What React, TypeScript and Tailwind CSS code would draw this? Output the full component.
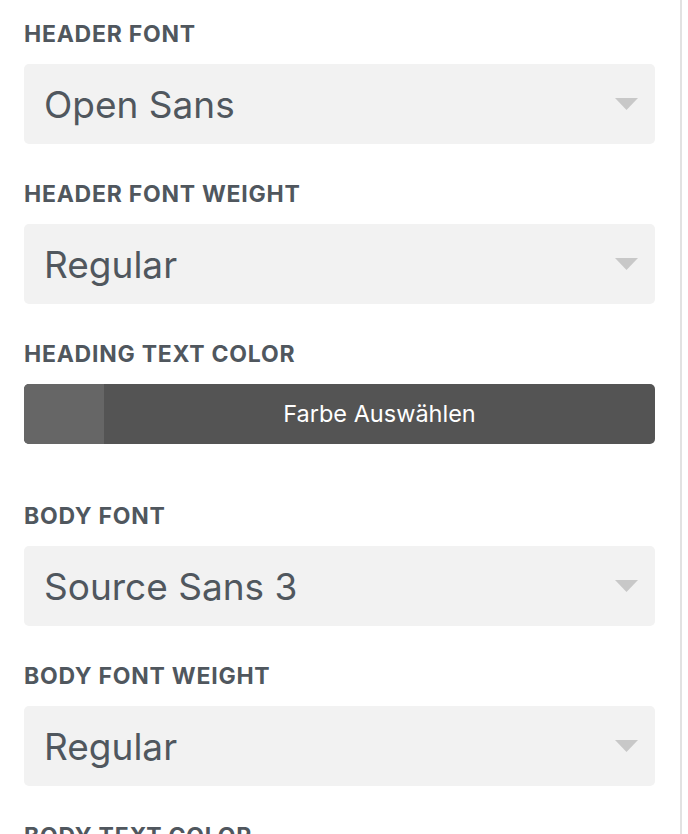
import React from "react";

const font = { fontFamily: 'Inter, "Liberation Sans", sans-serif' };

function Label({ children }: { children: React.ReactNode }) {
  return (
    <div className="text-[23px] leading-[24px] font-bold tracking-[0.75px] text-[#50575e] uppercase">
      {children}
    </div>
  );
}

function Select({ value }: { value: string }) {
  return (
    <div className="mt-[18px] h-[80px] w-full rounded-[5px] bg-[#f2f2f2] flex items-center justify-between pl-[20px] pr-[17px]">
      <span className="text-[37px] leading-none text-[#50575e]">{value}</span>
      <svg width="23" height="12" viewBox="0 0 23 12">
        <polygon points="0,0 23,0 11.5,12" fill="#c8c8c8" />
      </svg>
    </div>
  );
}

export default function App() {
  return (
    <div className="w-[688px] h-[834px] overflow-hidden bg-white flex" style={font}>
      <div className="w-[682px] h-full border-r-2 border-[#e2e2e2] pl-6 pr-[25px] pt-[22px]">
        <Label>Header Font</Label>
        <Select value="Open Sans" />
        <div className="mt-[38px]">
          <Label>Header Font Weight</Label>
        </div>
        <Select value="Regular" />
        <div className="mt-[38px]">
          <Label>Heading Text Color</Label>
        </div>
        <div className="mt-[18px] h-[60px] w-full rounded-[5px] overflow-hidden flex bg-[#545454]">
          <div className="w-[80px] h-full bg-[#666666]" />
          <div className="flex-1 flex items-center justify-center text-white text-[23.5px]">
            Farbe Auswählen
          </div>
        </div>
        <div className="mt-[60px]">
          <Label>Body Font</Label>
        </div>
        <Select value="Source Sans 3" />
        <div className="mt-[38px]">
          <Label>Body Font Weight</Label>
        </div>
        <Select value="Regular" />
        <div className="mt-[38px]">
          <Label>Body Text Color</Label>
        </div>
      </div>
    </div>
  );
}
